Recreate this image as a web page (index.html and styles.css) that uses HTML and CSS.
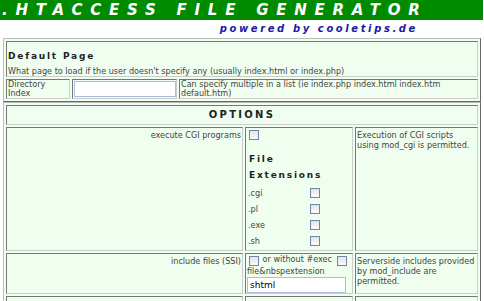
FILE: index.html
```html
<!DOCTYPE html>
<html>
  <head>
    <title>.htaccess file generator</title>
    <link rel="stylesheet" href="styles.css">
  </head>

  <body>
    <div class="banner">
      <h1 class="title">.HTACCESS FILE GENERATOR</h1>
    </div>
    <div class="powered">powered by cooletips.de</div>

    <table class="box">
      <tr>
        <td colspan="3" class="intro">
          <h2 class="caption">Default Page</h2>
          What page to load if the user doesn't specify any (usually index.html or index.php)
        </td>
      </tr>
      <tr class="pair">
        <td class="name">Directory Index</td>
        <td class="field"><input type="text" class="text dir"></td>
        <td>Can specify multiple in a list (ie index.php index.html index.htm default.htm)</td>
      </tr>
    </table>

    <table class="box options">
      <tr>
        <td colspan="3" class="heading">OPTIONS</td>
      </tr>
      <tr class="cgi">
        <td class="label">execute CGI programs</td>
        <td class="choice">
          <input type="checkbox" class="check">
          <h2 class="caption ext">File Extensions</h2>
          <table class="exts">
            <tr><td class="kind">.cgi</td><td><input type="checkbox" class="check"></td></tr>
            <tr><td class="kind">.pl</td><td><input type="checkbox" class="check"></td></tr>
            <tr><td class="kind">.exe</td><td><input type="checkbox" class="check"></td></tr>
            <tr><td class="kind">.sh</td><td><input type="checkbox" class="check"></td></tr>
          </table>
        </td>
        <td class="note">Execution of CGI scripts using mod_cgi is permitted.</td>
      </tr>
      <tr>
        <td class="label">include files (SSI)</td>
        <td class="choice ssi-box">
          <span class="line"><input type="checkbox" class="check"> or without #exec <input type="checkbox" class="check"></span><br>
          file&amp;nbspextension<br>
          <input type="text" class="text ssi" value="shtml">
        </td>
        <td class="note">Serverside includes provided by mod_include are permitted.</td>
      </tr>
      <tr class="more">
        <td class="label"></td>
        <td class="choice"></td>
        <td class="note"></td>
      </tr>
    </table>
  </body>
</html>
```

FILE: styles.css
```css
body {
  margin: 0;
  background: #fff;
  font-family: "DejaVu Sans", Verdana, sans-serif;
  font-size: 8.1px;
  color: #444;
}

.banner {
  width: 483px;
  height: 20px;
  background: #008a00;
}

.title {
  margin: 0;
  padding-left: 2px;
  font-size: 15px;
  line-height: 20px;
  font-style: italic;
  font-weight: bold;
  letter-spacing: 7.75px;
  color: #fff;
  white-space: nowrap;
}

.powered {
  width: 418px;
  height: 18px;
  text-align: right;
  font-size: 10px;
  line-height: 18px;
  font-style: italic;
  font-weight: bold;
  letter-spacing: 2.6px;
  color: #1a1aa8;
  white-space: nowrap;
}

.box {
  width: 478px;
  margin: 0 0 0 3px;
  border: 1px solid;
  border-color: #bbb #666 #666 #bbb;
  border-spacing: 2px;
  background: #effeef;
}

.box td {
  border: 1px solid;
  border-color: #777 #ccc #ccc #777;
  padding: 0 1px;
  vertical-align: top;
  font-size: 8.1px;
  line-height: 10px;
}

.caption {
  margin: 8px 0 4px;
  font-size: 9px;
  line-height: 12px;
  letter-spacing: 1.8px;
  color: #222;
}

.box .pair td {
  line-height: 9px;
}

.name {
  width: 60px;
}

.box .field {
  width: 102px;
  padding: 1px 0 0 1px;
}

.text {
  box-sizing: border-box;
  margin: 0;
  padding: 0 2px;
  height: 16px;
  border: 1px solid #a9bedb;
  background: #fff;
  font-family: "DejaVu Sans", sans-serif;
  font-size: 9px;
  color: #000;
}

.dir {
  width: 102px;
}

.box .heading {
  text-align: center;
  vertical-align: middle;
  font-size: 10px;
  line-height: 18px;
  font-weight: bold;
  letter-spacing: 2.3px;
  color: #222;
}

.box .label {
  width: 233px;
  padding-top: 2px;
  text-align: right;
}

.choice {
  width: 104px;
}

.check {
  appearance: none;
  box-sizing: border-box;
  width: 10px;
  height: 10px;
  margin: 2px 2px 0 2px;
  border: 1px solid #6f86a6;
  background: linear-gradient(#e4e4e4, #fafafa);
  vertical-align: top;
}

.cgi {
  height: 124px;
}

.ext {
  margin: 11px 0 3px 2px;
  width: 80px;
  line-height: 16px;
}

.exts {
  border-spacing: 0;
}

.box .exts td {
  border: none;
  padding: 0 0 0 1px;
  height: 16px;
  line-height: 14px;
}

.box .exts .kind {
  width: 59px;
}

.box .note {
  padding-top: 2px;
}

.line {
  white-space: nowrap;
}

.ssi-box .check {
  margin-right: 1px;
}

.ssi {
  width: 99px;
  margin-top: 1px;
}

.more {
  height: 30px;
}
```
